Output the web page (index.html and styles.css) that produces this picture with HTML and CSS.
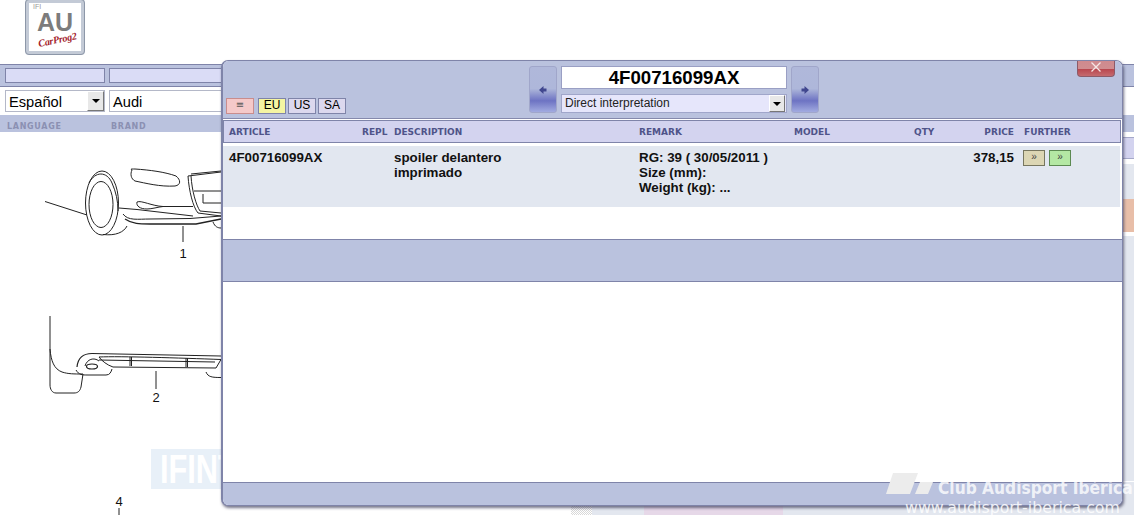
FILE: index.html
```html
<!DOCTYPE html>
<html lang="en">
<head>
  <meta charset="UTF-8" />
  <meta name="viewport" content="width=device-width, initial-scale=1.0"/>
  <title>AU CarProg2 - Parts</title>
  <link rel="stylesheet" href="styles.css">
</head>
<body>
<div class="page">

  <div class="top">
    <div class="logo">
      <span class="logo-ifi">IFI</span>
      <span class="logo-au">AU</span>
      <span class="logo-sub">CarProg2</span>
    </div>
  </div>

  <div class="filter-bar">
    <div class="filter-field"></div>
    <div class="filter-field wide"></div>
  </div>
  <div class="filter-row">
    <div class="combo">Español<span class="combo-arrow"></span></div>
    <div class="combo wide">Audi</div>
  </div>
  <div class="filter-labels">
    <div class="filter-label">LANGUAGE</div>
    <div class="filter-label">BRAND</div>
  </div>

  <div class="main">
    <div class="diagram">
      <div class="stamp"><span>IFINT</span></div>
      <svg class="drawing" viewBox="0 133 571 383" width="571" height="383" fill="none" stroke="#222" stroke-width="1">
        <!-- front of car -->
        <path d="M45 202.5 L87 216"/>
        <ellipse cx="102" cy="204" rx="16.5" ry="32"/>
        <ellipse cx="101" cy="205.500" rx="12" ry="23"/>
        <path d="M89 184 C95 172 107 172 112 184 C116 193 118 202 118 212"/>
        <path d="M103 235.500 C116 237 124 233 127 227"/>
        <path d="M132 171 C130 170 131 170 135 170 C150 171 165 173 176 177 C181 181 181 186 175 187 C160 188 145 184 135 182 C131 180 130 175 132 171 Z"/>
        <path d="M119 209 L137 210.500 L193 217"/>
        <path d="M137 203 C141 201 152 207 163 207.500 L193 207.500"/>
        <path d="M137 203 C136 207 140 210 147 210 C152 210 158 208 163 207.500"/>
        <path d="M123 215 C128 222 138 220 150 220 L190 219.500 L221 217"/>
        <path d="M125 220 C132 225 140 225 150 225 L196 225 L221 220" stroke-width="1.300"/>
        <path d="M188 177 L221 173 M191 175 L221 172"/>
        <path d="M188 177 C189 192 193 208 198 214 L221 217"/>
        <path d="M191 177 C192 192 196 206 200 212 L221 214"/>
        <path d="M194 192 L221 192 M203 195 L203 204 L221 204"/>
        <path d="M213 223 C215 228 218 229 221 229"/>
        <path d="M183 227 L183 243"/>
        <!-- rear of car -->
        <path d="M50 317 L50 350 C51 362 54 370 62 373 C68 375 74 375 83 375 L81 388 C80 392 78 394 74 394 L56 394 C52 394 50 390 50 386 L50 350"/>
        <path d="M77 368 C78 358 84 354.500 92 354.500 L221 357" stroke-width="1.200"/>
        <path d="M99 358 C120 357 180 359 221 360.500 L216 369 L113 368 C107 366 102 362 99 358 Z"/>
        <path d="M99 361 L215 363"/>
        <path d="M130 358 L130 367 M131.500 358 L131.500 367 M186 359 L186 368 M187.500 359 L187.500 368"/>
        <ellipse cx="92" cy="367.500" rx="5.500" ry="2.500" stroke-width="1.200"/>
        <path d="M85 367 C87 360 94 358 99 362"/>
        <path d="M76 371 C79 376 82 376 88 376 L106 376 C110 376 111 373 112 370"/>
        <path d="M206 373 C208 378 212 378.500 221 378.500"/>
        <path d="M156 372 L156 390"/>
        <path d="M119 509 L119 516"/>
        <text class="callout" x="183" y="259">1</text>
        <text class="callout" x="156" y="403">2</text>
        <text class="callout" x="119" y="507">4</text>
      </svg>
    </div>

    <div class="parts">
      <div class="parts-gap"></div>
      <div class="parts-head"></div>
      <div class="parts-row tall"></div>
      <div class="parts-row hilite"></div>
      <div class="parts-row body"></div>
      <div class="parts-row last">
        <div class="cell-dots"></div>
        <div class="cell-plain"></div>
        <div class="cell-pink"></div>
        <div class="cell-plain grow"></div>
      </div>
    </div>
  </div>

  <!-- popup window with the article -->
  <div class="dialog">
    <div class="close-btn"><svg width="10" height="10" viewBox="0 0 10 10"><path d="M0.500 0.500 L9.500 9.500 M9.500 0.500 L0.500 9.500" stroke="#f6e6e6" stroke-width="1.300"/></svg></div>
    <div class="dialog-top">
      <div class="tabs">
        <div class="tab tab-menu">&equiv;</div>
        <div class="tab tab-on">EU</div>
        <div class="tab">US</div>
        <div class="tab">SA</div>
      </div>
      <div class="nav-btn"><svg class="nav-arrow" width="10" height="10" viewBox="0 0 10 10"><path d="M8.500 3.500 L5.500 3.500 L5.500 1 L1 5 L5.500 9 L5.500 6.500 L8.500 6.500 Z" fill="#41478f"/></svg></div>
      <div class="search">
        <div class="article-no">4F00716099AX</div>
        <div class="mode-select">Direct interpretation<span class="combo-arrow"></span></div>
      </div>
      <div class="nav-btn"><svg class="nav-arrow" width="10" height="10" viewBox="0 0 10 10"><path d="M1.500 3.500 L4.500 3.500 L4.500 1 L9 5 L4.500 9 L4.500 6.500 L1.500 6.500 Z" fill="#41478f"/></svg></div>
    </div>

    <div class="cols table-head">
      <div>ARTICLE</div>
      <div>REPL</div>
      <div>DESCRIPTION</div>
      <div>REMARK</div>
      <div>MODEL</div>
      <div>QTY</div>
      <div class="right">PRICE</div>
      <div>FURTHER</div>
    </div>

    <div class="cols table-row">
      <div>4F00716099AX</div>
      <div></div>
      <div>spoiler delantero<br>imprimado</div>
      <div>RG: 39 ( 30/05/2011 )<br>Size (mm):<br>Weight (kg): ...</div>
      <div></div>
      <div></div>
      <div class="right price">378,15</div>
      <div class="further">
        <div class="go-btn">&raquo;</div>
        <div class="go-btn green">&raquo;</div>
      </div>
    </div>

    <div class="dialog-space"></div>
    <div class="dialog-band"></div>
    <div class="dialog-blank"></div>
    <div class="dialog-foot"></div>
  </div>

  <!-- site watermark burned over everything -->
  <div class="watermark">
    <svg class="wm-logo" width="47" height="22" viewBox="0 0 47 22"><path d="M7 0 L32 0 L24 21 L0 21 Z M34 9 L47 9 L42 21 L29 21 Z" fill="#ececec"/></svg>
    <div class="wm-title">Club Audisport Ibérica</div>
    <div class="wm-url">www.audisport-iberica.com</div>
  </div>

</div>
</body>
</html>
```

FILE: styles.css
```css
* {
  box-sizing: border-box;
}

body {
  margin: 0;
  background: white;
  font-family: "Liberation Sans", Arial, sans-serif;
  color: black;
}

.page {
  position: relative;
  width: 1134px;
  height: 516px;
  overflow: hidden;
}

/* logo */
.top {
  height: 65px;
  padding-left: 25px;
}

.logo {
  position: relative;
  width: 60px;
  height: 56px;
  margin-top: -1px;
  background: white;
  border: 4px solid #c3cad6;
  outline: 1px solid #8d97a8;
  outline-offset: -1px;
  border-radius: 4px;
  display: flex;
  flex-direction: column;
  align-items: center;
}

.logo-ifi {
  position: absolute;
  left: 4px;
  top: 0;
  font-size: 7px;
  line-height: 8px;
  color: #999;
}

.logo-au {
  margin-top: 9px;
  font-size: 25px;
  line-height: 21px;
  font-weight: bold;
  color: #7c7c7c;
}

.logo-sub {
  margin-top: 1px;
  margin-left: 4px;
  font-family: "Liberation Serif", serif;
  font-style: italic;
  font-weight: bold;
  font-size: 10px;
  line-height: 12px;
  letter-spacing: -0.2px;
  color: #a3222c;
  transform: rotate(-12deg);
}

/* filter bars */
.filter-bar {
  height: 23px;
  padding: 3px 5px 0;
  background: #bac2de;
  border-top: 1px solid #7f84a9;
  border-bottom: 1px solid #7f84a9;
  display: flex;
  gap: 4px;
}

.filter-field {
  width: 100px;
  height: 15px;
  background: #dadcf6;
  border: 1px solid #7f84a9;
}

.filter-field.wide {
  width: 400px;
}

.filter-row {
  height: 28px;
  padding: 3px 5px 0;
  display: flex;
  gap: 4px;
}

.combo {
  position: relative;
  width: 100px;
  height: 22px;
  padding-left: 3px;
  border: 1px solid #b4b8c8;
  font-size: 14.67px;
  line-height: 22px;
}

.combo.wide {
  width: 400px;
}

.combo-arrow {
  position: absolute;
  right: 0;
  top: 0;
  bottom: 0;
  width: 17px;
  background: #e8e8e8;
  border-right: 1px solid #777;
  border-bottom: 1px solid #777;
  border-top: 1px solid #fff;
  border-left: 1px solid #fff;
}

.combo-arrow::after {
  content: "";
  position: absolute;
  left: 4px;
  top: 7px;
  border-left: 4px solid transparent;
  border-right: 4px solid transparent;
  border-top: 4px solid black;
}

.filter-labels {
  height: 17px;
  padding: 6px 7px 0;
  background: #bac2de;
  display: flex;
}

.filter-label {
  width: 104px;
  font-family: "DejaVu Sans", sans-serif;
  font-size: 8px;
  line-height: 12px;
  font-weight: bold;
  letter-spacing: 0.7px;
  color: #8b90b2;
}

/* lower part of the page, behind the popup */
.main {
  height: 383px;
  display: flex;
}

.diagram {
  position: relative;
  width: 571px;
}

.drawing {
  position: absolute;
  left: 0;
  top: 0;
}

.callout {
  font-family: "Liberation Sans", sans-serif;
  font-size: 13px;
  fill: #111;
  stroke: none;
  text-anchor: middle;
}

.stamp {
  position: absolute;
  left: 151px;
  top: 317px;
  width: 120px;
  height: 40px;
  padding-left: 9px;
  background: #e8f0f8;
  color: white;
  font-size: 41px;
  line-height: 40px;
  font-weight: bold;
}

.stamp span {
  display: inline-block;
  transform: scaleX(0.75);
  transform-origin: left;
}

.parts {
  flex: 1;
  display: flex;
  flex-direction: column;
}

.parts-gap {
  height: 5px;
}

.parts-head {
  height: 22px;
  background: #d3d3ef;
  border-top: 1px solid #a5a8c8;
  border-bottom: 1px solid #a5a8c8;
  margin-bottom: 5px;
}

.parts-row {
  background: #e3e7ef;
}

.parts-row.tall {
  height: 35px;
}

.parts-row.hilite {
  height: 33px;
  margin-bottom: 4px;
  background: #e8bea8;
}

.parts-row.body {
  height: 246px;
  border-bottom: 1px solid white;
}

.parts-row.last {
  flex: 1;
  background: none;
  display: flex;
}

.cell-dots {
  width: 21px;
  background: repeating-conic-gradient(#d8d8d8 0 25%, #fff 0 50%) 0 0 / 2px 2px;
}

.cell-plain {
  width: 52px;
  background: #e3e7ef;
}

.cell-plain.grow {
  flex: 1;
}

.cell-pink {
  width: 139px;
  background: #e6d8e8;
}

/* popup */
.dialog {
  position: absolute;
  left: 221px;
  top: 60px;
  width: 902px;
  height: 446px;
  background: white;
  border: 1px solid #7f84a9;
  border-left-width: 2px;
  border-radius: 7px;
  box-shadow: 1px 2px 3px rgba(60, 60, 90, 0.7);
  overflow: hidden;
  display: flex;
  flex-direction: column;
}

.close-btn {
  position: absolute;
  right: 7px;
  top: 0;
  width: 38px;
  height: 16px;
  padding-top: 1px;
  background: linear-gradient(#cf8a8e 0, #d08d90 50%, #b9474f 55%, #c56a6f 100%);
  border: 1px solid #8d5a68;
  border-top: none;
  border-radius: 0 0 4px 4px;
  display: flex;
  justify-content: center;
}

.dialog-top {
  height: 58px;
  padding: 5px 0 0 3px;
  background: #bac2de;
  border-bottom: 1px solid #8589ac;
  display: flex;
  flex-shrink: 0;
}

.tabs {
  width: 303px;
  padding-top: 32px;
  display: flex;
  gap: 2px;
}

.tab {
  width: 28px;
  height: 16px;
  background: #dcd8ee;
  border: 1px solid #7f84a9;
  font-size: 12px;
  line-height: 12px;
  text-align: center;
}

.tab-menu {
  background: #f5c9c9;
  border-color: #c98d8d;
  margin-right: 2px;
  font-family: "DejaVu Sans", sans-serif;
  font-size: 10px;
  color: #555;
}

.tab-on {
  background: #f5f5a2;
}

.nav-btn {
  width: 28px;
  height: 47px;
  padding-top: 18px;
  background: linear-gradient(#b0b8da 0, #aeb7da 48%, #6d73c3 75%, #a2abe0 100%);
  border: 1px solid #a0a6ca;
  border-radius: 3px;
}

.nav-arrow {
  display: block;
  margin: 0 auto;
}

.search {
  width: 226px;
  margin: 0 4px;
  display: flex;
  flex-direction: column;
  gap: 5px;
}

.article-no {
  height: 23px;
  background: white;
  border: 1px solid #9a9fc4;
  font-size: 18.67px;
  line-height: 21px;
  font-weight: bold;
  text-align: center;
}

.mode-select {
  position: relative;
  height: 19px;
  padding-left: 3px;
  background: #e6e6fb;
  border: 1px solid #a0a6ca;
  font-size: 12px;
  line-height: 17px;
  color: #222;
}

.mode-select .combo-arrow {
  width: 16px;
  right: 1px;
}

.mode-select .combo-arrow::after {
  left: 3px;
  top: 6px;
}

/* columns are the same for head and row */
.cols {
  display: grid;
  grid-template-columns: 133px 32px 245px 155px 120px 40px 60px 1fr;
  padding-left: 6px;
  flex-shrink: 0;
}

.right {
  text-align: right;
}

.table-head {
  height: 23px;
  margin: 1px 1px 0 0;
  background: #d3d3ef;
  border: 1px solid #7f84a9;
  padding-left: 5px;
  font-family: "DejaVu Sans", sans-serif;
  font-size: 9px;
  font-weight: bold;
  line-height: 22px;
  color: #4f5389;
}

.table-head div:last-child {
  padding-left: 10px;
}

.table-row {
  height: 61px;
  margin: 3px 2px 0 0;
  padding-top: 4px;
  background: #e2e7f0;
  font-size: 13.33px;
  font-weight: bold;
  line-height: 15px;
  color: #111;
}

.price {
  font-weight: bold;
}

.further {
  display: flex;
  gap: 4px;
  padding-left: 9px;
}

.go-btn {
  width: 22px;
  height: 16px;
  background: #dcd6b4;
  border: 1px solid #77765f;
  font-size: 10px;
  font-weight: normal;
  line-height: 12px;
  text-align: center;
  color: #444;
}

.go-btn.green {
  background: #b4e8a4;
  border-color: #5c8a52;
}

.dialog-space {
  height: 32px;
  flex-shrink: 0;
}

.dialog-band {
  height: 43px;
  background: #bac2de;
  border-top: 1px solid #7f84a9;
  border-bottom: 1px solid #7f84a9;
  flex-shrink: 0;
}

.dialog-blank {
  flex: 1;
}

.dialog-foot {
  height: 23px;
  background: #bac2de;
  border-top: 1px solid #7f84a9;
  flex-shrink: 0;
}

/* watermark */
.watermark {
  position: absolute;
  left: 886px;
  top: 473px;
  width: 248px;
  height: 43px;
}

.wm-logo {
  position: absolute;
  left: 0;
  top: 0;
}

.wm-title {
  position: absolute;
  left: 52px;
  top: 5px;
  font-family: "DejaVu Sans Condensed", "DejaVu Sans", sans-serif;
  font-size: 17.2px;
  line-height: 20px;
  font-weight: bold;
  white-space: nowrap;
  color: rgba(255, 255, 255, 0.8);
}

.wm-url {
  position: absolute;
  left: 19px;
  top: 26px;
  font-family: "DejaVu Sans", sans-serif;
  font-size: 15.8px;
  line-height: 18px;
  white-space: nowrap;
  color: rgba(255, 255, 255, 0.85);
}
```
